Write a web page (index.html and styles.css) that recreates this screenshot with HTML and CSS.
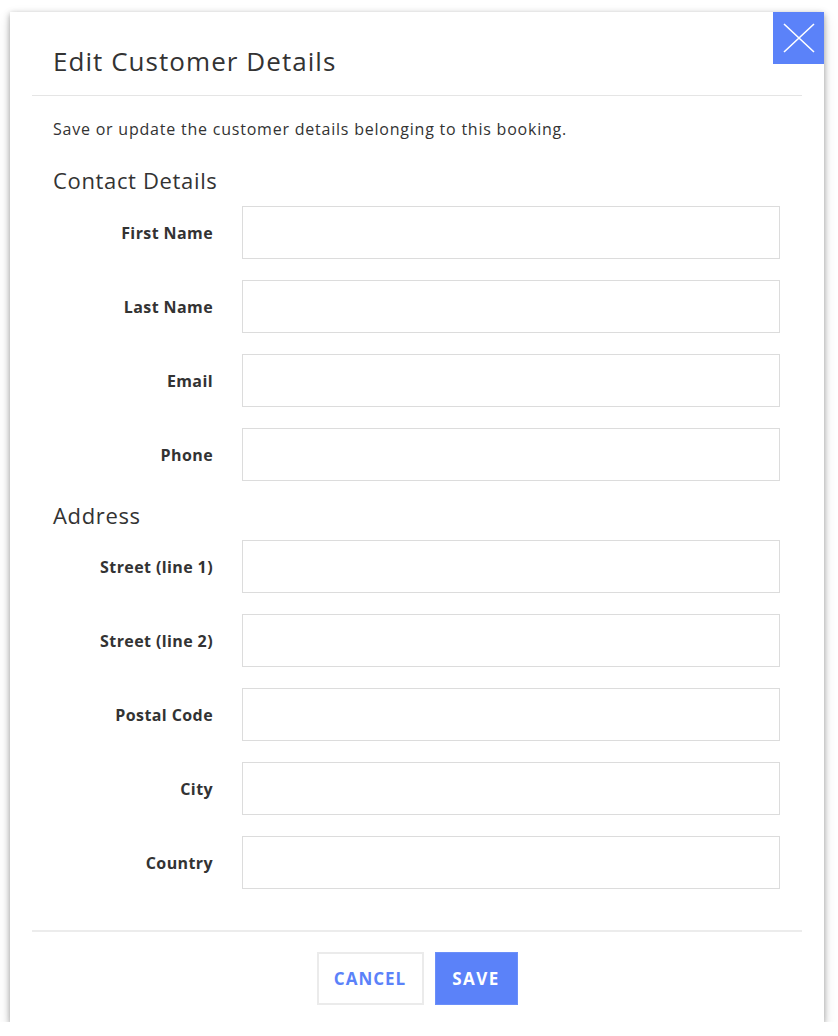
FILE: index.html
```html
<!DOCTYPE html>
<html>
<head>
<meta charset="utf-8">
<link rel="stylesheet" href="styles.css">
</head>
<body>
<div class="modal">
  <button class="close" aria-label="Close">
    <svg width="34" height="32" viewBox="0 0 34 32"><path d="M2 2 L32 30 M32 2 L2 30" stroke="#fff" stroke-width="1.6" fill="none"/></svg>
  </button>
  <div class="header"><h1 class="title">Edit Customer Details</h1></div>
  <div class="body">
    <p class="desc">Save or update the customer details belonging to this booking.</p>
    <h2 class="section first">Contact Details</h2>
    <div class="form">
      <label class="label">First Name</label><input class="input" type="text">
      <label class="label">Last Name</label><input class="input" type="text">
      <label class="label">Email</label><input class="input" type="text">
      <label class="label">Phone</label><input class="input" type="text">
    </div>
    <h2 class="section second">Address</h2>
    <div class="form">
      <label class="label">Street (line 1)</label><input class="input" type="text">
      <label class="label">Street (line 2)</label><input class="input" type="text">
      <label class="label">Postal Code</label><input class="input" type="text">
      <label class="label">City</label><input class="input" type="text">
      <label class="label">Country</label><input class="input" type="text">
    </div>
  </div>
  <div class="footer">
    <button class="btn btn-cancel">CANCEL</button>
    <button class="btn btn-save">SAVE</button>
  </div>
</div>
</body>
</html>
```
FILE: styles.css
```css
* { box-sizing: border-box; }
html, body { margin: 0; padding: 0; background: #fff; }
body {
  font-family: "Open Sans", "Lato", sans-serif;
  color: #333;
  padding: 12px 14px 0 10px;
}
.modal {
  position: relative;
  width: 814px;
  height: 1010px;
  background: #fff;
  box-shadow: 0 2px 6px rgba(0,0,0,0.35), 0 6px 14px rgba(0,0,0,0.12);
}
.close {
  position: absolute;
  top: 0;
  right: 0;
  width: 51px;
  height: 52px;
  border: 0;
  padding: 0;
  background: #5b82f9;
  display: flex;
  align-items: center;
  justify-content: center;
}
.header {
  margin: 0 22px;
  padding: 31px 0 16px 21px;
  border-bottom: 1px solid #e5e5e5;
}
.title {
  margin: 0;
  font-size: 26px;
  font-weight: 400;
  line-height: 36px;
  color: #333;
  letter-spacing: 1.05px;
}
.body {
  padding: 0 44px 0 43px;
}
.desc {
  margin: 23px 0 0;
  font-size: 16px;
  line-height: 20px;
  letter-spacing: 0.78px;
}
.section {
  margin: 0;
  font-size: 22px;
  font-weight: 400;
  line-height: 28px;
  letter-spacing: 0.65px;
}
.section.first { margin-top: 27px; }
.section.second { margin-top: 20px; }
.form {
  display: grid;
  grid-template-columns: 160px 538px;
  column-gap: 29px;
  row-gap: 21px;
  align-items: center;
}
.section.first + .form { margin-top: 12px; }
.section.second + .form { margin-top: 11px; }
.label {
  text-align: right;
  font-size: 16px;
  font-weight: 700;
  color: #333;
  letter-spacing: 0.4px;
}
.input {
  height: 53px;
  width: 538px;
  border: 1.5px solid #dcdcdc;
  background: #fff;
  margin: 0;
}
.footer {
  margin: 41px 22px 0;
  border-top: 2px solid #ececec;
  padding-top: 20px;
  display: flex;
  justify-content: center;
  gap: 11px;
}
.btn {
  height: 53px;
  font-family: inherit;
  font-size: 17px;
  font-weight: 700;
  margin: 0;
  padding: 0;
  letter-spacing: 1px;
}
.btn-cancel {
  width: 107px;
  background: #fff;
  border: 2px solid #ebebeb;
  color: #5b82f9;
}
.btn-save {
  width: 83px;
  background: #5b82f9;
  border: 1px solid #6b8ff9;
  color: #fff;
  letter-spacing: 1.4px;
}
```
